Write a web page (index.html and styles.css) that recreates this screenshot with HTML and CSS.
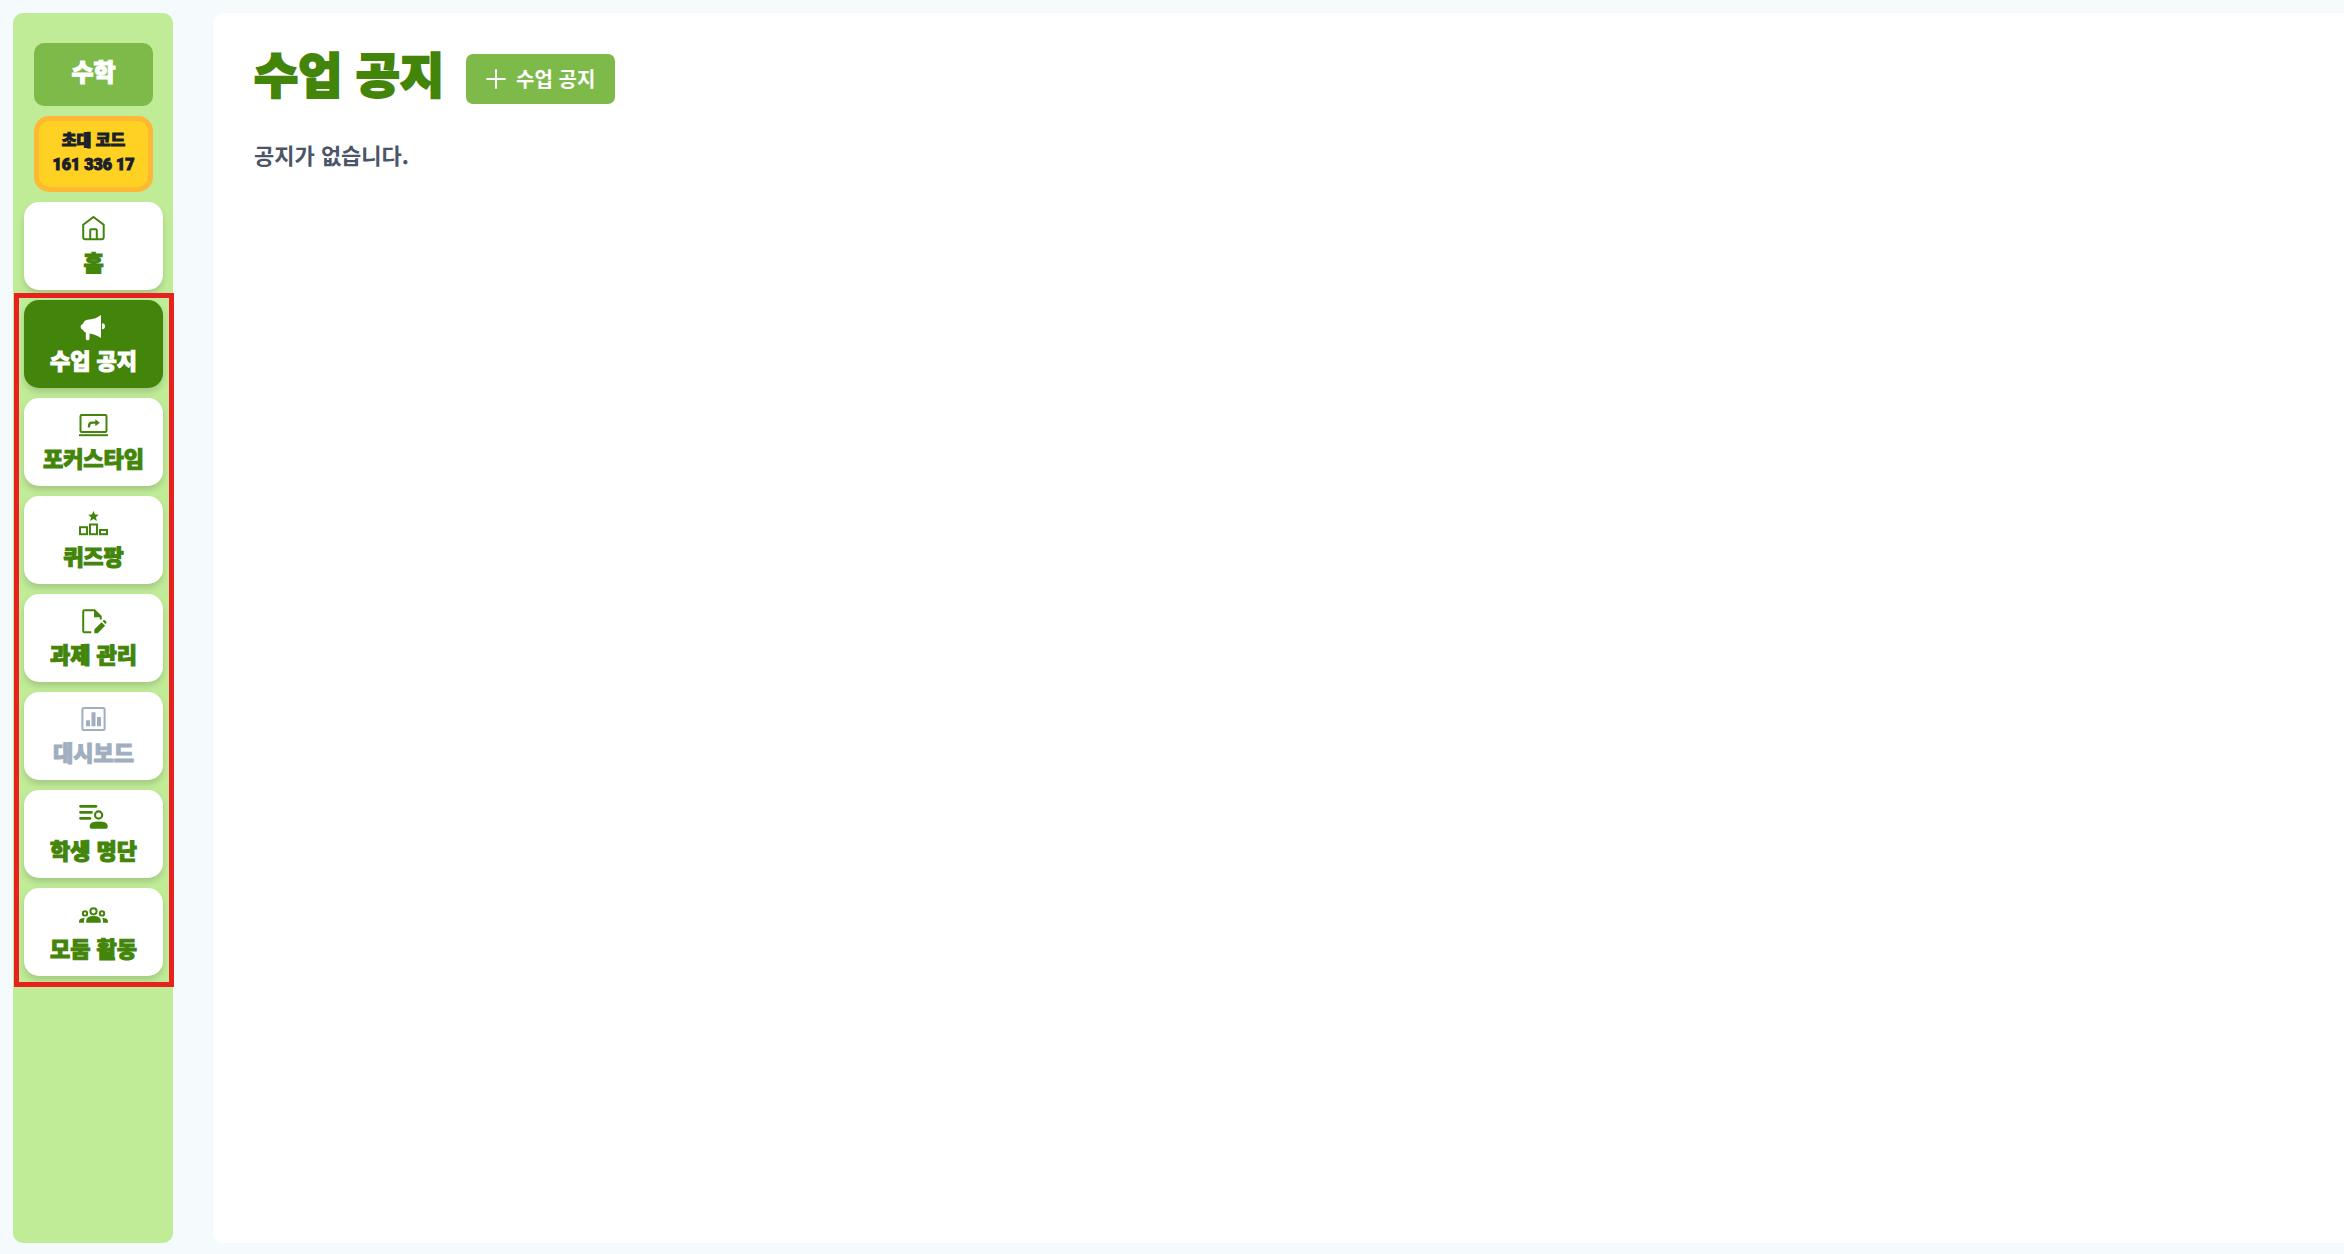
FILE: index.html
```html
<!DOCTYPE html>
<html lang="ko">
<head>
    <meta charset="UTF-8">
    <meta name="viewport" content="width=device-width, initial-scale=1.0">
    <title>수업 공지</title>
    <link rel="stylesheet" href="styles.css">
</head>
<body>
    <aside class="sidebar">
        <div class="class-name">수학</div>
        <button type="button" class="invite-code">
            <span>초대 코드</span>
            <span class="code">161 336 17</span>
        </button>

        <nav class="menu">
            <a class="menu-item" href="#home">
                <svg class="menu-icon line" viewBox="0 0 29 29"><path d="M4.2 10.8 14.5 3l10.2 7.8v12.4a2 2 0 0 1-2 2H6.2a2 2 0 0 1-2-2zM11.2 25V16.2a1 1 0 0 1 1-1h4.6a1 1 0 0 1 1 1V25"/></svg>
                <span>홈</span>
            </a>

            <div class="menu-group">
                <a class="menu-item active" href="#notice" aria-current="page">
                    <svg class="menu-icon" viewBox="0 0 29 29"><path d="M22 3v23q-6-4-11.500-4.500v5a1.800 1.800 0 0 1-3.700 0v-6q-2-.6-2.600-2.600Q1.500 17 1.500 14.700q0-2 2.500-3Q5.500 7.500 10.500 7.500 16.500 7 22 3zM23 11.300a3 3 0 0 1 0 6z"/></svg>
                    <span>수업 공지</span>
                </a>
                <a class="menu-item" href="#focus">
                    <svg class="menu-icon line" viewBox="0 0 29 29"><rect x="1.500" y="5" width="26" height="17" rx="1.200"/><path d="M0 25.200H29"/><path stroke-width="2.300" d="M10 17.500v-1.500q0-3.300 3.300-3.300H18"/><path class="solid" d="M16.300 9.200 20.800 12.700l-4.500 3.500z"/></svg>
                    <span>포커스타임</span>
                </a>
                <a class="menu-item" href="#quiz">
                    <svg class="menu-icon line" viewBox="0 0 29 29"><path class="solid" d="m14.500 3 1.600 3.400 3.700.4-2.800 2.500.8 3.700-3.300-1.900-3.300 1.900.8-3.700-2.800-2.500 3.700-.4z"/><rect x="1" y="19.200" width="7" height="7"/><rect x="11" y="16.500" width="7" height="9.700"/><rect x="21" y="22" width="7" height="4.200"/></svg>
                    <span>퀴즈팡</span>
                </a>
                <a class="menu-item" href="#tasks">
                    <svg class="menu-icon line" viewBox="0 0 29 29"><path d="M12.300 26.200H5.400a1.200 1.200 0 0 1-1.200-1.200V5.400A1.200 1.200 0 0 1 5.400 4.200H15.500l6.200 6.300v3"/><path class="solid" d="M15 3.500 22.700 11.200H15zM15.300 27.300v-3.700l7.300-7.300 3.500 3.500-7.400 7.500zM23.600 15.300l1-1q.6-.5 1.200 0l1.500 1.500q.5.600 0 1.200l-1 1z"/></svg>
                    <span>과제 관리</span>
                </a>
                <a class="menu-item disabled" aria-disabled="true">
                    <svg class="menu-icon line" viewBox="0 0 29 29"><rect x="3.400" y="4" width="22.200" height="22" rx="1.500"/><path class="solid" d="M7 16.300h4v6H7zM12.500 8.300h4v14h-4zM18 13h4v9.300h-4z"/></svg>
                    <span>대시보드</span>
                </a>
                <a class="menu-item" href="#students">
                    <svg class="menu-icon line" viewBox="0 0 29 29"><path stroke-width="2.800" stroke-linecap="round" d="M1.500 4.300H17M1.500 10.300H12.500M1.500 16.300H11"/><circle cx="19.600" cy="13" r="3.600" stroke-width="2.200"/><path class="solid" d="M10.700 25v-1.300q0-4.300 9-4.300t9 4.300V25q0 1.700-1.700 1.700H12.400q-1.700 0-1.700-1.700z"/></svg>
                    <span>학생 명단</span>
                </a>
                <a class="menu-item" href="#groups">
                    <svg class="menu-icon line" viewBox="0 0 29 29"><circle cx="14.500" cy="11.300" r="3.100"/><circle cx="6" cy="13.400" r="2.200"/><circle cx="23" cy="13.400" r="2.200"/><path class="solid" d="M7.200 22.700V21q0-4.900 7.300-4.900t7.300 4.900v1.700zM0 22.700v-1.300q0-3.400 5.800-3.400-.8 1.400-.8 3v1.700zM29 22.700v-1.300q0-3.400-5.800-3.400.8 1.400.8 3v1.700z"/></svg>
                    <span>모둠 활동</span>
                </a>
            </div>
        </nav>
    </aside>

    <main class="content">
        <header class="content-header">
            <h1>수업 공지</h1>
            <button type="button" class="add-btn">
                <svg viewBox="0 0 20 20"><path d="M10 1v18M1 10h18"/></svg>
                <span>수업 공지</span>
            </button>
        </header>
        <p class="empty">공지가 없습니다.</p>
    </main>
</body>
</html>
```

FILE: styles.css
```css
* {
    box-sizing: border-box;
}

body {
    margin: 0;
    padding: 13px 0 11px 13px;
    min-height: 100vh;
    display: flex;
    gap: 40px;
    background-color: #f5fafd;
    font-family: "Noto Sans CJK KR", "Noto Sans", sans-serif;
}

.sidebar {
    width: 160px;
    flex-shrink: 0;
    padding: 30px 10px 0 11px;
    display: flex;
    flex-direction: column;
    gap: 10px;
    background-color: #c0ec98;
    border-radius: 10px;
}

.class-name,
.invite-code {
    margin: 0 10px;
    font-weight: 900;
    text-align: center;
    -webkit-text-stroke: 1px currentColor;
}

.class-name {
    padding: 10px 0 17px;
    background-color: #7eba4a;
    border-radius: 10px;
    color: #fff;
    font-size: 24px;
    line-height: 36px;
}

.invite-code {
    padding: 5px 0 9px;
    display: flex;
    flex-direction: column;
    align-items: center;
    background-color: #fed122;
    border: 5px solid #fdb933;
    border-radius: 15px;
    color: #1a202c;
    font-family: inherit;
    font-size: 16px;
    line-height: 26px;
    cursor: pointer;
}

.code {
    font-family: Roboto, sans-serif;
}

.menu,
.menu-group {
    display: flex;
    flex-direction: column;
    gap: 10px;
}

/* red frame around the class tools */
.menu-group {
    position: relative;
}

.menu-group::after {
    content: "";
    position: absolute;
    top: -7px;
    right: -11px;
    bottom: -11px;
    left: -10px;
    border: 5px solid #e82020;
    pointer-events: none;
}

.menu-item {
    height: 88px;
    padding-top: 12px;
    display: flex;
    flex-direction: column;
    align-items: center;
    gap: 3px;
    background-color: #fff;
    border-radius: 15px;
    box-shadow: 0 4px 6px rgba(0, 0, 0, 0.15);
    color: #42850a;
    font-size: 22px;
    font-weight: 900;
    line-height: 30px;
    text-decoration: none;
    white-space: nowrap;
    -webkit-text-stroke: 1px currentColor;
}

.menu-item.active {
    background-color: #42850a;
    color: #fff;
}

.menu-item.disabled {
    color: #a0aec0;
    cursor: not-allowed;
}

.menu-icon {
    width: 29px;
    height: 29px;
    flex-shrink: 0;
    fill: currentColor;
}

.menu-icon.line {
    fill: none;
    stroke: currentColor;
    stroke-width: 2;
}

.menu-icon .solid {
    fill: currentColor;
    stroke: none;
}

.content {
    flex: 1;
    padding: 24px 41px;
    background-color: #fff;
    border-radius: 10px 0 0 10px;
}

.content-header {
    display: flex;
    align-items: flex-end;
    gap: 22px;
}

h1 {
    margin: 0;
    color: #42850a;
    font-size: 48px;
    font-weight: 900;
    line-height: 70px;
    -webkit-text-stroke: 2px currentColor;
}

.add-btn {
    height: 50px;
    margin-bottom: 3px;
    padding: 0 20px;
    display: flex;
    align-items: center;
    gap: 10px;
    background-color: #7eba4a;
    border: none;
    border-radius: 7px;
    color: #fff;
    font-family: inherit;
    font-size: 20px;
    font-weight: 600;
    line-height: 28px;
    cursor: pointer;
}

.add-btn svg {
    width: 20px;
    height: 20px;
    fill: none;
    stroke: currentColor;
    stroke-width: 2;
    stroke-linecap: round;
}

.empty {
    margin: 31px 0 0;
    color: #4a5568;
    font-size: 22px;
    font-weight: 600;
    line-height: 33px;
}
```
